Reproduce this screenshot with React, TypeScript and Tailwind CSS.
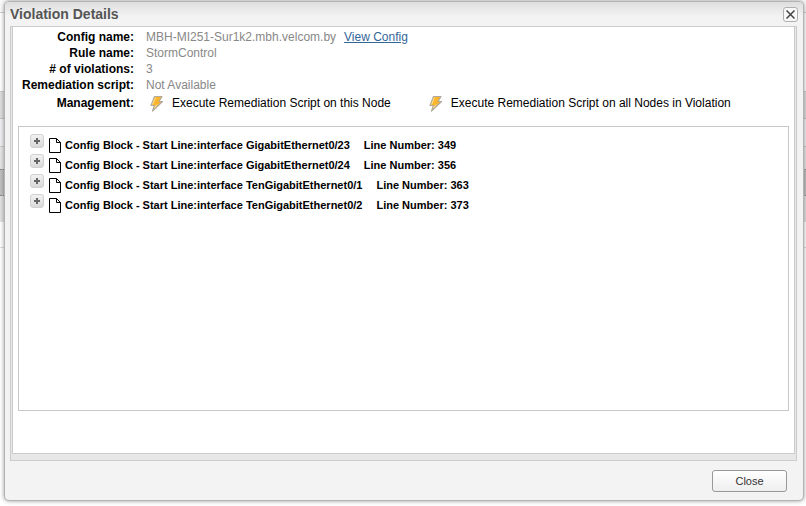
import React, { useState } from 'react';

const blocks = [
  { line: 'interface GigabitEthernet0/23', number: 349 },
  { line: 'interface GigabitEthernet0/24', number: 356 },
  { line: 'interface TenGigabitEthernet0/1', number: 363 },
  { line: 'interface TenGigabitEthernet0/2', number: 373 },
];

const BoltIcon = () => (
  <svg width="13" height="17" viewBox="0 0 13 17" className="shrink-0" aria-hidden="true">
    <path d="M4.500 1.500H12L9 6.500H12.500L2.500 16 4.500 10.500H1Z" fill="#fdb52b" stroke="#b0a99c" strokeWidth="1.200" strokeLinejoin="round" />
    <path d="M5.500 2.500 2.500 9.500M7 9.500 4.500 13" fill="none" stroke="#ffe3a0" />
  </svg>
);

const FileIcon = () => (
  <svg width="12" height="15" viewBox="0 0 12 15" className="mt-1 ml-[5px] shrink-0" aria-hidden="true">
    <path d="M.5.5h7l4 4v10H.5Z" fill="#fff" stroke="#000" />
    <path d="M7.500.5v4h4" fill="none" stroke="#000" />
  </svg>
);

const Field = ({ label, children }: { label: string; children: React.ReactNode }) => (
  <div className="flex">
    <dt className="w-[121px] shrink-0 text-right font-bold text-black">{label}</dt>
    <dd className="ml-3 text-[#888888]">{children}</dd>
  </div>
);

// page behind the dialog, only its edges are visible
const Backdrop = () => (
  <div className="absolute inset-0 flex flex-col bg-white" aria-hidden="true">
    <div className="h-[13px] border-b border-[#d0d0d0] bg-[#fafafa]" />
    <div className="h-[79px] border-b border-[#cccccc]" />
    <div className="h-[27px] border-b border-[#c4c4c4] bg-[#dedede]" />
    <div className="h-7 border-b border-[#cccccc] bg-[#f0f0f2]" />
    <div className="h-[22px] bg-[#e6e6e6]" />
    <div className="h-[27px] border-y border-dotted border-[#888888] bg-[#c0c0c0]" />
    <div className="h-[26px] bg-[#e2e2e2]" />
    <div className="h-[26px] border-b border-[#dddddd]" />
  </div>
);

const ViolationDetails: React.FC = () => {
  const [open, setOpen] = useState<number[]>([]);

  const toggle = (n: number) =>
    setOpen(open.includes(n) ? open.filter((o) => o !== n) : [...open, n]);

  return (
    <div className="relative flex min-h-screen flex-col pt-px pr-0.5 pb-[5px] pl-1 font-['Liberation_Sans',Arial,sans-serif] text-xs leading-4 text-black">
      <Backdrop />
      <section
        role="dialog"
        aria-labelledby="dialog-title"
        className="relative flex flex-1 flex-col rounded-[5px] border border-[#b3b3b3] bg-[#f3f3f3] shadow-[0_0_4px_rgba(0,0,0,0.4)]"
      >
        <header className="flex h-6 items-center justify-between rounded-t bg-linear-to-b from-[#dedede] to-[#f3f3f3] to-60% px-[5px]">
          <h1 id="dialog-title" className="text-sm font-bold text-[#555555]">Violation Details</h1>
          <button
            type="button"
            aria-label="Close dialog"
            className="flex size-[15px] items-center justify-center rounded-[3px] border border-[#b0b0b0] bg-[#f8f8f8]"
          >
            <svg width="9" height="9" viewBox="0 0 9 9" aria-hidden="true">
              <path d="M.5.5l8 8M8.500.5l-8 8" stroke="#444" strokeWidth="1.500" />
            </svg>
          </button>
        </header>

        <div className="mr-1.5 ml-[5px] flex flex-1 flex-col border border-[#cccccc] bg-[#e7e7e7] px-px pb-1.5">
          <main className="flex flex-1 flex-col border border-t-0 border-[#cccccc] bg-white px-[5px] pt-0.5 pb-[42px]">
            <dl className="-ml-[5px]">
              <Field label="Config name:">
                MBH-MI251-Sur1k2.mbh.velcom.by
                <a href="#config" className="ml-2 text-[#336699] underline">View Config</a>
              </Field>
              <Field label="Rule name:">StormControl</Field>
              <Field label="# of violations:">3</Field>
              <Field label="Remediation script:">Not Available</Field>
              <div className="flex pt-0.5">
                <dt className="w-[121px] shrink-0 text-right font-bold">Management:</dt>
                <dd className="ml-4 flex gap-[38px]">
                  <button type="button" className="flex gap-[9px]">
                    <BoltIcon />
                    Execute Remediation Script on this Node
                  </button>
                  <button type="button" className="flex gap-[9px]">
                    <BoltIcon />
                    Execute Remediation Script on all Nodes in Violation
                  </button>
                </dd>
              </div>
            </dl>

            <ul className="mt-[14px] flex-1 border border-[#c8c8c8] px-[11px] pt-[7px] text-[11px] font-bold">
              {blocks.map((b) => (
                <li key={b.number} className="flex h-5 items-start">
                  <button
                    type="button"
                    aria-label={`Expand line ${b.number}`}
                    aria-expanded={open.includes(b.number)}
                    onClick={() => toggle(b.number)}
                    className="flex size-[14px] shrink-0 items-center justify-center rounded-[3px] border border-[#d0d0d0] bg-linear-to-b from-[#f2f2f2] to-[#d9d9d9]"
                  >
                    <svg width="6" height="6" viewBox="0 0 6 6" aria-hidden="true">
                      <path d="M0 3h6M3 0v6" stroke="#666" strokeWidth="2" />
                    </svg>
                  </button>
                  <FileIcon />
                  <span className="mt-[3px] ml-1">Config Block - Start Line:{b.line}</span>
                  <span className="mt-[3px] ml-[14px]">Line Number: {b.number}</span>
                </li>
              ))}
            </ul>
          </main>
        </div>

        <footer className="flex justify-end px-4 pt-[9px] pb-2">
          <button
            type="button"
            className="h-[22px] w-[75px] rounded-[3px] border border-[#999999] bg-linear-to-b from-white to-[#eeeeee] text-[11px] text-[#333333]"
          >
            Close
          </button>
        </footer>
      </section>
    </div>
  );
};

export default ViolationDetails;
